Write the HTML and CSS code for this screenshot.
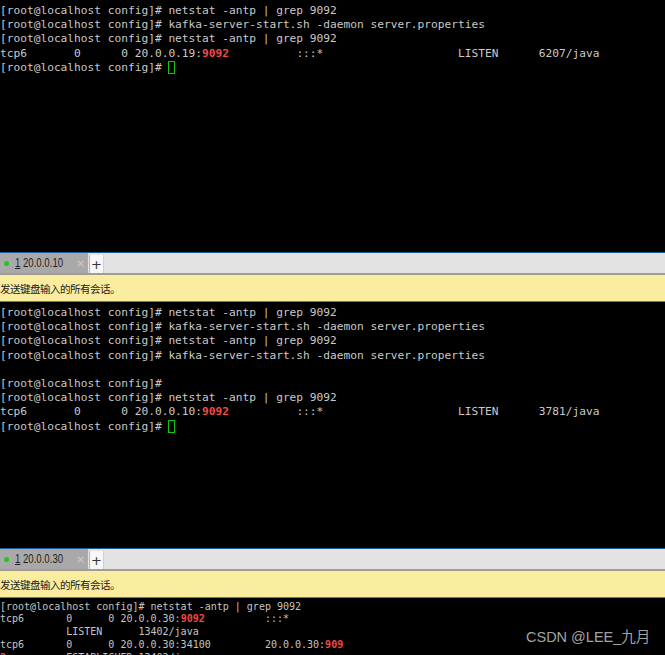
FILE: index.html
```html
<!DOCTYPE html>
<html>
<head>
<meta charset="utf-8">
<link rel="stylesheet" href="styles.css">
</head>
<body>
<div class="screen">
<pre class="term term-a">[root@localhost config]# netstat -antp | grep 9092
[root@localhost config]# kafka-server-start.sh -daemon server.properties
[root@localhost config]# netstat -antp | grep 9092
tcp6       0      0 20.0.0.19:<b class="hl">9092</b>          :::*                    LISTEN      6207/java
[root@localhost config]# <span class="cursor"></span></pre>
<div class="tabbar">
  <div class="tab"><span class="dot"></span><span class="label"><span class="num">1</span> 20.0.0.10</span><span class="close">×</span></div>
  <div class="add">+</div>
</div>
<div class="notice">发送键盘输入的所有会话。</div>
<pre class="term term-b">[root@localhost config]# netstat -antp | grep 9092
[root@localhost config]# kafka-server-start.sh -daemon server.properties
[root@localhost config]# netstat -antp | grep 9092
[root@localhost config]# kafka-server-start.sh -daemon server.properties

[root@localhost config]#
[root@localhost config]# netstat -antp | grep 9092
tcp6       0      0 20.0.0.10:<b class="hl">9092</b>          :::*                    LISTEN      3781/java
[root@localhost config]# <span class="cursor"></span></pre>
<div class="tabbar">
  <div class="tab"><span class="dot"></span><span class="label"><span class="num">1</span> 20.0.0.30</span><span class="close">×</span></div>
  <div class="add">+</div>
</div>
<div class="notice">发送键盘输入的所有会话。</div>
<pre class="term term-c">[root@localhost config]# netstat -antp | grep 9092
tcp6       0      0 20.0.0.30:<b class="hl">9092</b>          :::*
           LISTEN      13402/java
tcp6       0      0 20.0.0.30:34100         20.0.0.30:<b class="hl">909</b>
<b class="hl">2</b>          ESTABLISHED 13402/java</pre>
<div class="watermark">CSDN @LEE_九月</div>
</div>
</body>
</html>
```
FILE: styles.css
```css
html, body {
  margin: 0;
  padding: 0;
  background: #000;
}
.screen {
  position: relative;
  width: 665px;
  height: 655px;
  overflow: hidden;
  background: #000;
  display: flex;
  flex-direction: column;
}
.term {
  margin: 0;
  background: #000;
  color: #c9c9c9;
  font-family: "DejaVu Sans Mono", monospace;
  white-space: pre;
  overflow: hidden;
  box-sizing: border-box;
  flex: none;
}
.term-a, .term-b {
  font-size: 11.2px;
  line-height: 14.2px;
  padding: 4px 0 0 0;
}
.term-a { height: 252px; }
.term-b { height: 246px; }
.term-c {
  font-size: 10px;
  line-height: 12.8px;
  padding: 2.6px 0 0 0;
  height: 57px;
  color: #c4c4c4;
}
.hl {
  color: #f24848;
  font-weight: bold;
}
.cursor {
  display: inline-block;
  width: 7px;
  height: 13px;
  box-sizing: border-box;
  border: 1px solid #12c412;
  vertical-align: top;
  margin-top: 0;
}
.tabbar {
  flex: none;
  height: 20px;
  background: #e3e3e3;
  border-top: 1px solid #1d5c9a;
  border-bottom: 2px solid #a19d96;
  display: flex;
  align-items: stretch;
  font-family: "Liberation Sans", sans-serif;
  font-size: 12px;
  color: #1e1e1e;
}
.tab {
  width: 88px;
  background: #a9a9a9;
  display: flex;
  align-items: center;
  box-sizing: border-box;
  padding-left: 4px;
}
.dot {
  width: 5px;
  height: 5px;
  border-radius: 50%;
  background: #1ec81e;
  margin-right: 6px;
  flex: none;
}
.label {
  display: inline-block;
  white-space: pre;
  transform: scaleX(0.8);
  transform-origin: left center;
  width: 52px;
  margin-right: 9px;
}
.num {
  text-decoration: underline;
}
.close {
  color: #cdcdcd;
  font-family: "DejaVu Sans", sans-serif;
  font-size: 11px;
}
.add {
  width: 13px;
  margin: 2px 0 0 1px;
  background: #f7f7f7;
  border-left: 1px solid #b5b5b5;
  border-right: 1px solid #d0d0d0;
  display: flex;
  align-items: center;
  justify-content: center;
  font-family: "DejaVu Sans", sans-serif;
  font-size: 13px;
  color: #333;
}
.notice {
  flex: none;
  height: 26px;
  background: #faed9f;
  border-bottom: 1px solid #7d785a;
  display: flex;
  align-items: center;
  font-family: "Noto Sans CJK SC", sans-serif;
  font-size: 10.5px;
  letter-spacing: -0.5px;
  color: #222;
}
.watermark {
  position: absolute;
  left: 526px;
  top: 627px;
  font-family: "Liberation Sans", "Noto Sans CJK SC", sans-serif;
  font-size: 14.5px;
  line-height: 20px;
  color: #a3a3a3;
}
```
